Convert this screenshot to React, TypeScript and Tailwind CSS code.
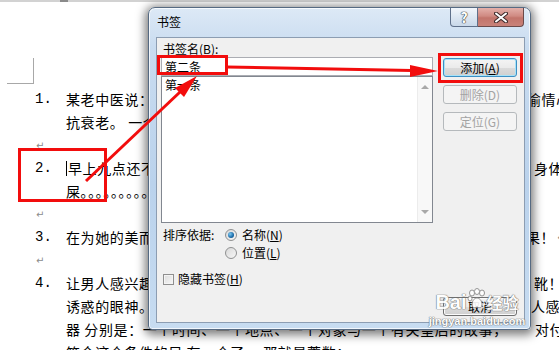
import type { ReactNode } from "react";

type DocLine = {
  num?: string;
  mark?: boolean;
  cursor?: boolean;
  left?: ReactNode;
  w?: string;
  right?: string;
  tail?: boolean;
};

const lines: DocLine[] = [
  { num: "1.", left: "某老中医说：经常保持好心情可以使人年轻，远离疾病和", w: "w-[461px]", right: "偷情心" },
  { left: "抗衰老。 一个人的心情好坏直接影响着身体健康" },
  { mark: true },
  { num: "2.", cursor: true, left: "早上九点还不起床的女人，总会让人觉得她的生活没有规律的", w: "w-[468px]", right: "身体" },
  { left: "屎｡｡｡｡｡｡｡｡｡｡｡｡｡｡｡｡" },
  { mark: true },
  { num: "3.", left: "在为她的美而惊叹的同时，也不要忘记她背后付出的努力和效", w: "w-[460px]", right: "果！", tail: true },
  { mark: true },
  { num: "4.", left: "让男人感兴趣的女人身上总有一样东西，那就是一双漂亮的长", w: "w-[468px]", right: "靴！" },
  { left: "诱惑的眼神。 这是女人最有杀伤力的武器，让每一个男", w: "w-[465px]", right: "人感" },
  { left: "器 分别是：一个时间、一个地点、一个对象与一个有关皇后的故事，", w: "w-[469px]", right: "对付" },
  { left: "符合这个条件的只 有一个了， 那就是蒿数；" },
];

function Line({ l }: { l: DocLine }) {
  return (
    <div className="flex h-[23px] items-center whitespace-nowrap">
      <div className="flex w-[66px] shrink-0 items-center pl-[35px]">
        {l.num && <span className="font-['Liberation_Mono',monospace] text-[14px] tracking-normal">{l.num}</span>}
        {l.mark && <span className="pl-[1px] font-['DejaVu_Sans',sans-serif] text-[10px] text-[#8c8c8c]">↵</span>}
      </div>
      {l.left && (
        <div className={`${l.w ?? "w-[480px]"} flex shrink-0 items-center overflow-hidden`}>
          {l.cursor && <span className="mr-[1px] inline-block h-[15px] w-[1px] bg-black" />}
          <span>{l.left}</span>
        </div>
      )}
      {l.right && <span>{l.right}</span>}
      {l.tail && <span className="ml-[2px] font-['DejaVu_Sans',sans-serif] text-[10px] text-[#8c8c8c]">↵</span>}
    </div>
  );
}

function Btn({ children, focus, disabled }: { children: ReactNode; focus?: boolean; disabled?: boolean }) {
  if (disabled) {
    return (
      <div className="flex h-[19px] items-center justify-center rounded-[3px] border border-[#b5b9bc] bg-[#f4f4f4] text-[#a3a3a3]">
        {children}
      </div>
    );
  }
  return (
    <div
      className={
        focus
          ? "flex h-[19px] items-center justify-center rounded-[3px] border border-[#3c8fc4] bg-[linear-gradient(180deg,#f4f4f4_0%,#ebebeb_50%,#dcdcdc_51%,#cfcfcf_100%)] shadow-[inset_0_0_0_1px_#a6e2f8]"
          : "flex h-[19px] items-center justify-center rounded-[3px] border border-[#707070] bg-[linear-gradient(180deg,#f2f2f2_0%,#ebebeb_50%,#dddddd_51%,#cfcfcf_100%)] shadow-[inset_0_0_0_1px_#fbfbfb]"
      }
    >
      {children}
    </div>
  );
}

function Radio({ on }: { on?: boolean }) {
  return (
    <span className="flex h-[12px] w-[12px] shrink-0 items-center justify-center rounded-full border border-[#8f9091] bg-[linear-gradient(135deg,#d9d9d9,#f6f6f6)]">
      {on && <span className="h-[6px] w-[6px] rounded-full bg-[radial-gradient(circle_at_35%_35%,#7cc8f2,#1a6ba8_60%,#0e4677)]" />}
    </span>
  );
}

function BookmarkDialog() {
  return (
    <div className="absolute left-[148px] top-[7px] flex h-[323px] w-[383px] flex-col rounded-t-[7px] rounded-b-[4px] border border-[#566a82] bg-[linear-gradient(180deg,#dde9f6_0%,#c9dcf0_12%,#bad2ec_55%,#c7dcf1_100%)] pb-[6px] pl-[7px] pr-[5px] text-[12px] text-black shadow-[inset_0_0_0_1px_rgba(255,255,255,0.75),0_2px_10px_3px_rgba(0,0,0,0.5)]">
      {/* title bar */}
      <div className="flex h-[29px] shrink-0 items-start">
        <span className="pl-[1px] pt-[7px] leading-[14px]">书签</span>
        <div className="ml-auto mr-[1px] flex">
          <div className="flex h-[19px] w-[28px] items-center justify-center rounded-bl-[4px] border border-t-0 border-[#5f708a] bg-[linear-gradient(180deg,#f2f6fb_0%,#dde7f2_50%,#c9d8e9_100%)] text-[14px] font-bold leading-none text-white [text-shadow:0_0_1px_#333,0_0_1px_#333,0_0_1px_#333]">
            ?
          </div>
          <div className="flex h-[19px] w-[46px] items-center justify-center rounded-br-[4px] border border-l-0 border-t-0 border-[#6b4a4a] bg-[linear-gradient(180deg,#e3b0aa_0%,#d08a82_45%,#c2746b_55%,#c98279_100%)]">
            <svg width="14" height="11" viewBox="0 0 14 11">
              <path d="M2 1.5 L12 9.5 M12 1.5 L2 9.5" stroke="#3d2a2a" strokeWidth="4" strokeLinecap="round" />
              <path d="M2 1.5 L12 9.5 M12 1.5 L2 9.5" stroke="#fff" strokeWidth="2" strokeLinecap="round" />
            </svg>
          </div>
        </div>
      </div>

      {/* content */}
      <div className="flex flex-1 border border-[#8c9db2] bg-[#f0f0f0]">
        <div className="ml-[4px] flex w-[272px] flex-col pt-[4px]">
          <div className="h-[14px] pl-[2px] leading-[14px]">
            书签名(<span className="underline">B</span>):
          </div>
          <div className="mt-[1px] h-[19px] border border-[#abadb3] bg-white pl-[3px] leading-[17px]">第二条</div>
          <div className="flex h-[147px] border border-[#828790] bg-white">
            <div className="flex-1 pl-[3px] leading-[16px]">第一条</div>
            <div className="flex w-[15px] flex-col items-center justify-between border-l border-[#ececec] bg-[#f8f8f8] py-[8px]">
              <span className="h-0 w-0 border-x-[4px] border-b-[4px] border-x-transparent border-b-[#a8a8a8]" />
              <span className="h-0 w-0 border-x-[4px] border-t-[4px] border-x-transparent border-t-[#a8a8a8]" />
            </div>
          </div>
          <div className="mt-[3px] flex h-[18px] items-center pl-[2px]">
            <span className="w-[62px]">排序依据:</span>
            <Radio on />
            <span className="ml-[5px]">
              名称(<span className="underline">N</span>)
            </span>
          </div>
          <div className="flex h-[18px] items-center pl-[64px]">
            <Radio />
            <span className="ml-[5px]">
              位置(<span className="underline">L</span>)
            </span>
          </div>
          <div className="mt-[10px] flex h-[14px] items-center pl-[2px]">
            <span className="h-[11px] w-[11px] border border-[#8f8f8f] bg-[linear-gradient(135deg,#dcdcdc,#f7f7f7)] shadow-[inset_0_0_0_1px_#f4f4f4]" />
            <span className="ml-[4px]">
              隐藏书签(<span className="underline">H</span>)
            </span>
          </div>
        </div>

        <div className="ml-[10px] flex w-[74px] flex-col pb-[6px] pt-[20px]">
          <Btn focus>
            添加(<span className="underline">A</span>)
          </Btn>
          <div className="mt-[8px]">
            <Btn disabled>删除(D)</Btn>
          </div>
          <div className="mt-[8px]">
            <Btn disabled>定位(G)</Btn>
          </div>
          <div className="mt-auto">
            <Btn>取消</Btn>
          </div>
        </div>
      </div>
    </div>
  );
}

function Annotations() {
  return (
    <svg className="pointer-events-none absolute left-0 top-0" width="559" height="350" viewBox="0 0 559 350">
      <g fill="none" stroke="#f20d0d" strokeWidth="3">
        <rect x="158.5" y="56.5" width="68" height="17" />
        <rect x="439.5" y="54.5" width="82" height="27" />
        <rect x="19.5" y="149.5" width="86" height="51" />
        <line x1="86" y1="181" x2="180" y2="92" />
        <path d="M227 67 L412 70.5" />
      </g>
      <g fill="#f20d0d">
        <polygon points="197,76 184,97 175,88" />
        <polygon points="438,71 410,65 410,77" />
      </g>
    </svg>
  );
}

function Watermark() {
  return (
    <div className="pointer-events-none absolute left-[427px] top-[288px] flex w-[100px] flex-col items-center text-white opacity-90 [text-shadow:0_0_1px_#6f6f6f,0_0_1px_#6f6f6f,0_0_1px_#6f6f6f]">
      <div className="flex items-end">
        <span className="font-['Liberation_Sans',sans-serif] text-[20px] font-bold leading-[20px]">Bai</span>
        <svg width="20" height="22" viewBox="0 0 20 22" className="mb-[2px]">
          <g fill="#fff" stroke="#8a8a8a" strokeWidth="1">
            <ellipse cx="5" cy="5" rx="2.5" ry="3" />
            <ellipse cx="10" cy="3.5" rx="2.5" ry="3" />
            <ellipse cx="15" cy="5" rx="2.5" ry="3" />
            <ellipse cx="3" cy="10.5" rx="2" ry="2.5" />
            <path d="M5 17 C5 12 8 10 10 10 C12 10 15 12 15 17 C15 20 12 20 10 19 C8 20 5 20 5 17 Z" />
          </g>
        </svg>
        <span className="text-[16px] font-bold leading-[20px]">经验</span>
      </div>
      <div className="mt-[3px] font-['Liberation_Sans',sans-serif] text-[11px] font-bold leading-[12px]">jingyan.baidu.com</div>
    </div>
  );
}

export default function App() {
  return (
    <div className="relative h-[350px] w-[559px] overflow-hidden bg-white font-['Noto_Sans_CJK_SC',sans-serif] text-black">
      {/* ruler edge */}
      <div className="flex h-[2px] bg-[#d2d2d2]">
        <div className="ml-[60px] w-[8px] bg-[#8a8a8a]" />
      </div>
      {/* page corner mark */}
      <div className="ml-[7px] mt-[56px] h-[26px] w-[27px] border-b border-r border-[#a8a8a8]" />
      {/* document */}
      <div className="mt-[4px] text-[14px] tracking-[0.6px]">
        {lines.map((l, i) => (
          <Line key={i} l={l} />
        ))}
      </div>

      <BookmarkDialog />
      <Watermark />
      <Annotations />
    </div>
  );
}
